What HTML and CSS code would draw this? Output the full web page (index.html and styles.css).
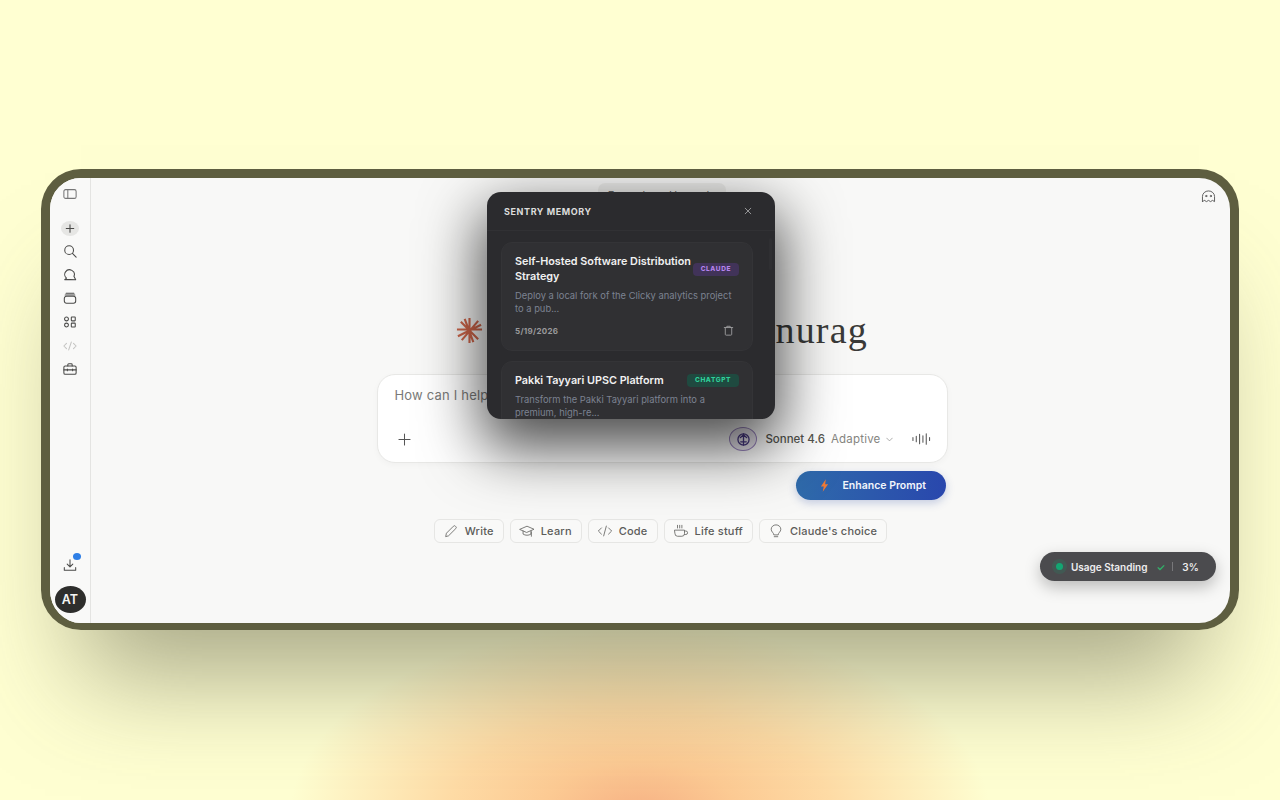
FILE: index.html
```html
<!DOCTYPE html>
<html lang="en">
<head>
  <meta charset="UTF-8">
  <meta name="viewport" content="width=device-width, initial-scale=1.0">
  <title>Claude</title>
  <link rel="stylesheet" href="styles.css">
</head>
<body>
  <div class="frame">
    <!-- sidebar -->
    <aside class="sidebar">
      <div class="side-top">
        <svg class="side-icon panel-icon" viewBox="0 0 16 14"><rect x="1" y="2" width="14" height="10" rx="2"/><path d="M5.5 2v10"/></svg>
        <button class="new-btn"><svg viewBox="0 0 12 12"><path d="M6 1.500v9M1.500 6h9"/></svg></button>
        <svg class="side-icon" viewBox="0 0 16 16"><circle cx="7" cy="7" r="5"/><path d="M10.8 10.8 15 15"/></svg>
        <svg class="side-icon" viewBox="0 0 16 16"><path d="M4 11.500A5.500 5.300 0 1 1 12.500 9.500L14.500 13.500 8 13.300M4 11.500 2 13.300h6"/></svg>
        <svg class="side-icon" viewBox="0 0 16 16"><path d="M3.500 2.500h9M2.500 4.500h11"/><rect x="1.500" y="6" width="13" height="8" rx="2.500"/></svg>
        <svg class="side-icon" viewBox="0 0 16 16"><circle cx="4" cy="4.500" r="2.200"/><circle cx="4" cy="11.500" r="2.200"/><rect x="9.500" y="2.300" width="4.500" height="4.400" rx=".6"/><rect x="9.500" y="9.300" width="4.500" height="4.400" rx=".6"/></svg>
        <svg class="side-icon faded" viewBox="0 0 16 12"><path d="M4 3 1 6l3 3M12 3l3 3-3 3M9.500 1.500l-3 9"/></svg>
        <svg class="side-icon" viewBox="0 0 16 14"><path d="M5.500 3.500V2a1 1 0 0 1 1-1h3a1 1 0 0 1 1 1v1.500"/><rect x="1" y="3.500" width="14" height="9.500" rx="1.500"/><path d="M1 8h14M5 7v2M11 7v2"/></svg>
      </div>
      <div class="side-bottom">
        <div class="download">
          <svg class="side-icon" viewBox="0 0 16 16"><path d="M8 2v8M4.800 7 8 10.200 11.200 7M1.500 11v3h13v-3"/></svg>
          <span class="download-dot"></span>
        </div>
        <div class="avatar">AT</div>
      </div>
    </aside>

    <!-- main -->
    <main class="main">
      <div class="plan-pill">Free plan · Upgrade</div>
      <svg class="ghost" viewBox="0 0 16 14"><path d="M1.500 12.500V7a6.500 6 0 0 1 13 0v5.500l-2.200-1.300-2.100 1.300L8 11.200l-2.200 1.300-2.100-1.300z"/><circle cx="5.500" cy="6.500" r=".7"/><circle cx="10.500" cy="6.500" r=".7"/></svg>

      <div class="greeting">
        <svg class="star" viewBox="0 0 28 28"><path d="M14 1v26M1 13h26M5 5l18 18M23 4 6 24M9 2l9 24M2 20l24-12"/></svg>
        <h1>Good evening, Anurag</h1>
      </div>

      <div class="composer">
        <div class="placeholder">How can I help you today?</div>
        <div class="composer-row">
          <svg class="plus" viewBox="0 0 14 14"><path d="M7 1v12M1 7h12"/></svg>
          <div class="composer-right">
            <span class="brain"><svg viewBox="0 0 14 14"><circle cx="7" cy="7" r="6"/><path d="M7 1v12M3.500 5 7 2l3.500 3M4 9.500h6"/></svg></span>
            <span class="model">Sonnet 4.6</span>
            <span class="effort">Adaptive</span>
            <svg class="chev" viewBox="0 0 10 6"><path d="M1 1l4 4 4-4"/></svg>
            <svg class="wave" viewBox="0 0 20 12"><path d="M1 4.500v3M4.500 3v6M8 1v10M11.500 2.500v7M15 .5v11M18.500 4.500v3"/></svg>
          </div>
        </div>
      </div>

      <div class="enhance-row">
        <button class="enhance">
          <svg viewBox="0 0 10 14"><path d="M6.500 0 1 8h3.200L3 14l6-8.500H5.700z"/></svg>
          Enhance Prompt
        </button>
      </div>

      <div class="chips">
        <div class="chip"><svg viewBox="0 0 16 16"><path d="M2 14l.8-3.500 8-8a1.500 1.500 0 0 1 2.200 0l.5.500a1.500 1.500 0 0 1 0 2.200l-8 8z"/></svg>Write</div>
        <div class="chip"><svg viewBox="0 0 18 16"><path d="M1 6l8-3.500L17 6l-8 3.500zM4.500 8v3.500c2.500 1.800 6.500 1.800 9 0V8M14 9v5"/></svg>Learn</div>
        <div class="chip"><svg viewBox="0 0 18 14"><path d="M5 3.500 1.500 7 5 10.500M13 3.500 16.500 7 13 10.500M10.500 1.500l-3 11"/></svg>Code</div>
        <div class="chip"><svg viewBox="0 0 18 16"><path d="M2 7h11v4a3 3 0 0 1-3 3H5a3 3 0 0 1-3-3zM13 8h1.500a1.500 1.500 0 0 1 0 4H13M5 1.500v3M7.500 1.500v3M10 1.500v3"/></svg>Life stuff</div>
        <div class="chip"><svg viewBox="0 0 16 16"><path d="M5.500 12c0-2-3-3-3-6a5.500 5 0 0 1 11 0c0 3-3 4-3 6zM6 14.500h4"/></svg>Claude's choice</div>
      </div>

      <div class="usage">
        <span class="usage-dot"></span>
        <span class="usage-label">Usage Standing</span>
        <span class="usage-check">✓</span>
        <span class="usage-sep"></span>
        <span class="usage-num">3%</span>
      </div>

      <!-- memory modal -->
      <div class="modal">
        <div class="modal-head">
          <span>SENTRY MEMORY</span>
          <svg viewBox="0 0 10 10"><path d="M1.500 1.500l7 7M8.500 1.500l-7 7"/></svg>
        </div>
        <div class="modal-list">
          <div class="card">
            <div class="card-top">
              <div class="card-title">Self-Hosted Software Distribution Strategy</div>
              <span class="tag tag-claude">CLAUDE</span>
            </div>
            <p class="card-text">Deploy a local fork of the Clicky analytics project to a pub...</p>
            <div class="card-foot">
              <span class="card-date">5/19/2026</span>
              <svg viewBox="0 0 12 13"><path d="M1 3h10M4 3V1.500h4V3M2.200 3v8a1 1 0 0 0 1 1h5.600a1 1 0 0 0 1-1V3"/></svg>
            </div>
          </div>
          <div class="card">
            <div class="card-top">
              <div class="card-title">Pakki Tayyari UPSC Platform</div>
              <span class="tag tag-chatgpt">CHATGPT</span>
            </div>
            <p class="card-text">Transform the Pakki Tayyari platform into a premium, high-re...</p>
          </div>
        </div>
        <span class="modal-thumb"></span>
      </div>
    </main>
  </div>
</body>
</html>
```

FILE: styles.css
```css
* {
  box-sizing: border-box;
}
html, body {
  height: 100%;
}
body {
  margin: 0;
  padding: 169px 41px 0;
  overflow: hidden;
  font-family: Inter, "Liberation Sans", sans-serif;
  background:
    radial-gradient(ellipse 350px 190px at 640px 815px, #f7b184, #fdcb94 28%, #ffdca6 55%, rgba(255, 240, 180, 0) 100%),
    #ffffd2;
}
svg {
  fill: none;
  stroke: currentColor;
  stroke-linecap: round;
  stroke-linejoin: round;
}

.frame {
  display: flex;
  height: 461px;
  overflow: hidden;
  border: 9px solid #5e5e40;
  border-bottom-width: 7px;
  border-radius: 40px;
  background: #f8f8f7;
}
body::before {
  content: "";
  position: absolute;
  z-index: -1;
  left: 41px;
  top: 169px;
  width: 1198px;
  height: 461px;
  border-radius: 40px;
  box-shadow: 0 85px 100px -40px rgba(81, 81, 62, .5);
}

/* sidebar */
.sidebar {
  flex: 0 0 41px;
  display: flex;
  flex-direction: column;
  justify-content: space-between;
  align-items: center;
  padding: 9px 0 10px;
  border-right: 1px solid #e4e4e2;
  background: #f9f9f8;
  color: #4a4a48;
}
.side-top {
  display: flex;
  flex-direction: column;
  align-items: center;
  gap: 9.600px;
}
.side-icon {
  display: block;
  width: 14px;
  height: 14px;
  stroke-width: 1.200;
}
.panel-icon {
  margin-bottom: 10px;
  color: #777;
}
.faded {
  color: #c4c4c2;
}
.new-btn {
  width: 18px;
  height: 15px;
  margin-bottom: -1px;
  padding: 2px 4px;
  border: 0;
  border-radius: 50%;
  background: #e6e6e4;
  color: #4a4a48;
}
.new-btn svg {
  display: block;
  width: 10px;
  height: 11px;
  stroke-width: 1.300;
}
.side-bottom {
  display: flex;
  flex-direction: column;
  align-items: center;
  gap: 14px;
}
.download {
  position: relative;
}
.download-dot {
  position: absolute;
  top: -5px;
  right: -4px;
  width: 8px;
  height: 7px;
  border-radius: 50%;
  background: #2f7fe6;
}
.avatar {
  width: 31px;
  height: 27px;
  border-radius: 50%;
  background: #2e2e2c;
  color: #f5f5f3;
  font-size: 12.500px;
  font-weight: 600;
  line-height: 27px;
  text-align: center;
}

/* main */
.main {
  flex: 1;
  position: relative;
  display: flex;
  flex-direction: column;
  align-items: center;
}
.plan-pill {
  position: absolute;
  top: 5px;
  left: 507px;
  width: 128px;
  height: 22px;
  border-radius: 7px;
  background: #ececea;
  color: #666;
  font-size: 11px;
  letter-spacing: .3px;
  line-height: 25px;
  text-align: center;
}
.ghost {
  position: absolute;
  top: 12px;
  right: 14px;
  width: 15px;
  height: 13px;
  stroke-width: 1;
  color: #555;
}
.greeting {
  display: flex;
  align-items: center;
  align-self: flex-end;
  margin-top: 131px;
  margin-right: 362px;
  height: 42px;
  gap: 16px;
}
.star {
  width: 27px;
  height: 27px;
  color: #d0664a;
  stroke-width: 2.200;
  stroke-linecap: butt;
}
.greeting h1 {
  margin: 0;
  font-family: "Liberation Serif", serif;
  font-size: 38px;
  font-weight: 400;
  letter-spacing: 1.200px;
  color: #3a3a38;
  white-space: nowrap;
}
.composer {
  width: 571px;
  height: 89px;
  margin-top: 23px;
  margin-left: 3px;
  padding: 12px 16px 0 17px;
  border: 1px solid #e8e8e6;
  border-radius: 18px;
  background: #fff;
  box-shadow: 0 2px 6px rgba(0, 0, 0, .03);
}
.placeholder {
  font-size: 13px;
  line-height: 16px;
  letter-spacing: .2px;
  color: #7a7a78;
}
.composer-row {
  display: flex;
  justify-content: space-between;
  align-items: center;
  margin-top: 24px;
}
.plus {
  width: 13px;
  height: 13px;
  margin-left: 3px;
  color: #555;
  stroke-width: 1.100;
}
.composer-right {
  display: flex;
  align-items: center;
  font-size: 11.500px;
  letter-spacing: .2px;
}
.brain {
  display: flex;
  align-items: center;
  justify-content: center;
  width: 28px;
  height: 24px;
  margin-right: 8px;
  border: 1px solid #9c86c2;
  border-radius: 50%;
  background: #ece8f1;
  color: #4a3a86;
}
.brain svg {
  width: 13px;
  height: 13px;
  stroke-width: 1.400;
}
.model {
  font-weight: 500;
  letter-spacing: 0;
  color: #55554f;
}
.effort {
  margin-left: 6px;
  color: #85857f;
}
.chev {
  width: 7px;
  height: 5px;
  margin-left: 5px;
  color: #8b8b88;
}
.wave {
  width: 19px;
  height: 12px;
  margin-left: 19px;
  color: #555;
  stroke-width: 1.100;
}
.enhance-row {
  width: 571px;
  margin-left: 3px;
  margin-top: 8px;
  display: flex;
  justify-content: flex-end;
  padding-right: 2px;
}
.enhance {
  display: flex;
  align-items: center;
  width: 150px;
  height: 29px;
  padding: 0 0 0 24px;
  gap: 14px;
  border: 0;
  border-radius: 15px;
  background: linear-gradient(90deg, #2f6bab, #2947ad);
  box-shadow: 0 3px 8px rgba(40, 70, 160, .25);
  color: #f2f5fb;
  font-family: inherit;
  font-size: 10.500px;
  font-weight: 600;
}
.enhance svg {
  width: 9px;
  height: 13px;
  fill: #f07a35;
  stroke: none;
}
.chips {
  display: flex;
  gap: 6px;
  margin-top: 19px;
}
.chip {
  display: flex;
  align-items: center;
  gap: 6px;
  height: 24px;
  padding: 0 9px 0 8px;
  border: 1px solid #e6e6e4;
  border-radius: 6px;
  background: #f9f9f8;
  color: #5c5c5a;
  font-size: 11px;
  font-weight: 500;
  letter-spacing: .2px;
}
.chip svg {
  width: 16px;
  height: 14px;
  stroke-width: 1;
  color: #6a6a68;
}
.usage {
  position: absolute;
  top: 374px;
  right: 14px;
  display: flex;
  align-items: center;
  width: 176px;
  height: 29px;
  padding: 0 16px;
  border-radius: 15px;
  background: #4b4b4e;
  box-shadow: 0 6px 16px rgba(0, 0, 0, .25);
  color: #eeeeee;
  font-size: 10px;
  font-weight: 600;
  white-space: nowrap;
}
.usage-dot {
  flex: none;
  width: 7px;
  height: 7px;
  border-radius: 50%;
  background: #13a672;
  box-shadow: 0 0 0 4px rgba(19, 166, 114, .16);
}
.usage-label {
  margin-left: 8px;
}
.usage-check {
  margin-left: 9px;
  color: #2fb36a;
}
.usage-sep {
  flex: none;
  width: 1px;
  height: 9px;
  margin-left: 7px;
  background: #77777a;
}
.usage-num {
  margin-left: 9px;
}

/* modal */
.modal {
  position: absolute;
  top: 14px;
  left: 396px;
  width: 288px;
  height: 227px;
  overflow: hidden;
  border-radius: 14px;
  background: #2b2b2e;
  box-shadow: 0 24px 60px 6px rgba(0, 0, 0, .7);
}
.modal-head {
  display: flex;
  justify-content: space-between;
  align-items: center;
  height: 39px;
  padding: 0 23px 0 17px;
  border-bottom: 1px solid #313134;
  color: #dcdcdc;
  font-size: 9px;
  font-weight: 700;
  letter-spacing: .6px;
}
.modal-head svg {
  width: 8px;
  height: 8px;
  color: #9a9a9c;
  stroke-width: 1.200;
}
.modal-list {
  display: flex;
  flex-direction: column;
  gap: 10px;
  padding: 11px 22px 0 14px;
}
.modal-thumb {
  position: absolute;
  top: 46px;
  right: 3px;
  width: 3px;
  height: 32px;
  border-radius: 2px;
  background: #2f2f32;
}
.card {
  flex: none;
  padding: 11px 13px 14px 13px;
  border: 1px solid #343437;
  border-radius: 11px;
  background: #303033;
}
.card-top {
  display: flex;
  align-items: center;
  justify-content: space-between;
}
.card-title {
  width: 178px;
  color: #f1f1f1;
  font-size: 10.800px;
  font-weight: 600;
  line-height: 15px;
}
.tag {
  flex: none;
  padding: 0 8px;
  height: 13px;
  border-radius: 4px;
  font-size: 6.500px;
  font-weight: 800;
  letter-spacing: .6px;
  line-height: 13px;
}
.tag-claude {
  background: #413359;
  color: #b583ec;
}
.tag-chatgpt {
  background: #1f4a40;
  color: #2fd09a;
}
.card-text {
  margin: 5px 0 0;
  color: #7c8291;
  font-size: 9.400px;
  line-height: 13px;
}
.card-foot {
  display: flex;
  justify-content: space-between;
  align-items: center;
  margin-top: 10px;
  color: #9a9a9c;
}
.card-date {
  font-size: 8px;
  font-weight: 700;
  letter-spacing: .3px;
}
.card-foot svg {
  width: 11px;
  height: 11px;
  margin-right: 5px;
  stroke-width: 1.100;
}
```
